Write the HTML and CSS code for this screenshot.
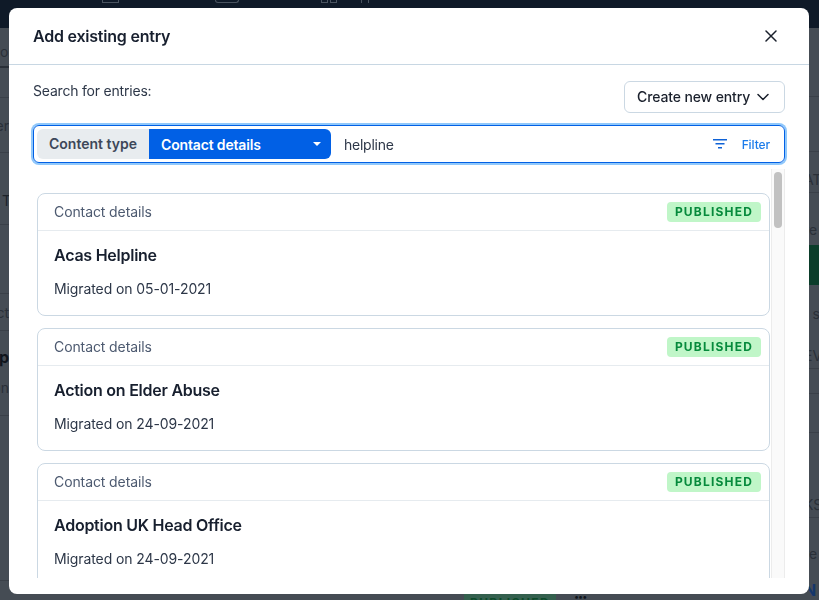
FILE: index.html
```html
<!DOCTYPE html>
<html lang="en">
<head>
<meta charset="utf-8">
<title>Add existing entry</title>
<link rel="stylesheet" href="styles.css">
</head>
<body>
<div class="page">
  <div class="topbar">
    <span class="ghost g1"></span>
    <span class="ghost g2"></span>
    <span class="ghost g3"></span>
    <span class="ghost g3"></span>
    <span class="ghost g4"></span>
  </div>
  <div class="under">
    <div class="strip strip-left">
      <div class="row r-l1"><span class="start">on</span><i class="tabline"></i></div>
      <div class="row r-l2 lined"></div>
      <div class="row r-l3 lined"><span>er</span></div>
      <div class="row r-l4 lined"><span class="dark">T</span></div>
      <div class="row r-l5 lined"></div>
      <div class="row r-l6 lined"><span>ct</span></div>
      <div class="row r-l7 lined"><span class="bold">p</span><span class="sub">on</span></div>
      <div class="row r-l8 lined"></div>
      <div class="row r-l9 lined"></div>
    </div>
    <div class="center">
      <div class="frag">
        <span class="frag-badge">PUBLISHED</span>
        <span class="frag-dots">•••</span>
      </div>
    </div>
    <div class="strip strip-right">
      <div class="row r-r1 lined"></div>
      <div class="row r-r2 lined"></div>
      <div class="row r-r3 lined"><span>AT</span></div>
      <div class="row r-r4"><span>re</span></div>
      <div class="row r-r5 green"></div>
      <div class="row r-r6"><span>t s</span></div>
      <div class="row r-r7 lined"><span>EV</span></div>
      <div class="row r-r8 lined"></div>
      <div class="row r-r9 lined"></div>
      <div class="row r-r10 lined"><span>KS</span></div>
      <div class="row r-r11"><span>re</span></div>
      <div class="row r-r12"><span class="blue">N</span></div>
    </div>
  </div>
</div>

<div class="modal" role="dialog" aria-label="Add existing entry">
  <header class="modal-head">
    <h2 class="modal-title">Add existing entry</h2>
    <button class="close" aria-label="Close">
      <svg width="12" height="12" viewBox="0 0 12 12" fill="none" stroke="#1a202c" stroke-width="1.5" stroke-linecap="round"><path d="M1 1l10 10M11 1L1 11"/></svg>
    </button>
  </header>
  <div class="modal-body">
    <div class="tools">
      <label class="search-label">Search for entries:</label>
      <button class="create">Create new entry
        <svg width="12" height="8" viewBox="0 0 12 8" fill="none" stroke="#1a202c" stroke-width="1.5" stroke-linecap="round" stroke-linejoin="round"><path d="M1 1.5l5 5 5-5"/></svg>
      </button>
    </div>
    <div class="searchbar">
      <span class="ct-label">Content type</span>
      <span class="ct-select"><span class="ct-value">Contact details</span><i class="caret"></i></span>
      <input class="query" value="helpline">
      <span class="filter">
        <svg width="14" height="10" viewBox="0 0 14 10" fill="#0f62d6"><rect x="0" y="0" width="14" height="1.5"/><rect x="2.5" y="4" width="9" height="1.5"/><rect x="5" y="8" width="4" height="1.5"/></svg>
        <span class="filter-text">Filter</span>
      </span>
    </div>
    <div class="results">
      <div class="list">
        <article class="card">
          <div class="card-head"><span class="card-type">Contact details</span><span class="badge">PUBLISHED</span></div>
          <div class="card-body"><h3 class="card-title">Acas Helpline</h3><p class="card-meta">Migrated on 05-01-2021</p></div>
        </article>
        <article class="card">
          <div class="card-head"><span class="card-type">Contact details</span><span class="badge">PUBLISHED</span></div>
          <div class="card-body"><h3 class="card-title">Action on Elder Abuse</h3><p class="card-meta">Migrated on 24-09-2021</p></div>
        </article>
        <article class="card">
          <div class="card-head"><span class="card-type">Contact details</span><span class="badge">PUBLISHED</span></div>
          <div class="card-body"><h3 class="card-title">Adoption UK Head Office</h3><p class="card-meta">Migrated on 24-09-2021</p></div>
        </article>
      </div>
      <div class="track"><div class="thumb"></div></div>
    </div>
  </div>
</div>
</body>
</html>
```

FILE: styles.css
```css
* { box-sizing: border-box; }
html, body { margin: 0; height: 600px; overflow: hidden; }
body { font-family: Inter, "Liberation Sans", sans-serif; color: #1a202c; background: #454c54; }

/* dimmed page behind the dialog */
.page { height: 600px; display: flex; flex-direction: column; background: #454c54; color: #2a3038; font-size: 14px; }
.topbar { height: 28px; flex: none; background: #0f1a28; display: flex; align-items: flex-start; padding-left: 102px; }
.ghost { display: block; height: 3px; border: 1px solid #4a5460; border-top: 0; }
.g1 { width: 17px; margin-right: 96px; }
.g2 { width: 24px; margin-right: 82px; border-radius: 0 0 4px 4px; }
.g3 { width: 7px; margin-right: 2px; }
.g4 { width: 8px; margin-left: 22px; border-bottom: 0; }
.under { flex: 1; display: flex; min-height: 0; }
.center { flex: 1; display: flex; flex-direction: column; justify-content: flex-end; }
.strip { width: 9px; flex: none; display: flex; flex-direction: column; overflow: hidden; }
.strip-right { width: 10px; }
.row { display: flex; flex-direction: column; justify-content: center; align-items: flex-start; flex: none; white-space: nowrap; overflow: hidden; }
.strip-left .row { align-items: flex-end; }
.strip-left .row .start { align-self: flex-start; }
.lined { border-bottom: 1px solid #3a4048; }
.dark { color: #1c222a; margin-right: -2px; }
.bold { font-weight: 700; color: #10151c; font-size: 16px; line-height: 22px; }
.sub { margin-top: 11px; }
.blue { color: #14366b; font-weight: 700; font-size: 16px; }
.strip-right .row span { margin-left: -5px; }
.tabline { display: block; width: 100%; height: 2px; background: #2a3038; margin-top: 6px; flex: none; }

.r-l1 { height: 46px; padding-top: 8px; }
.r-l2 { height: 24px; }
.r-l3 { height: 55px; }
.r-l4 { height: 72px; padding-top: 24px; }
.r-l5 { height: 69px; }
.r-l6 { height: 37px; }
.r-l7 { height: 85px; justify-content: flex-start; padding-top: 15px; }
.r-l8 { height: 165px; }
.r-l9 { height: 20px; border-bottom: 0; }

.r-r1 { height: 69px; }
.r-r2 { height: 55px; }
.r-r3 { height: 41px; justify-content: flex-end; padding-bottom: 4px; }
.r-r4 { height: 52px; justify-content: flex-end; padding-bottom: 7px; }
.green { height: 40px; background: #0b3d2a; }
.r-r6 { height: 57px; }
.r-r7 { height: 27px; }
.r-r8 { height: 25px; }
.r-r9 { height: 39px; }
.r-r10 { height: 85px; justify-content: flex-end; padding-bottom: 4px; }
.r-r11 { height: 56px; padding-top: 14px; }
.r-r12 { height: 26px; padding-top: 6px; }

.frag { height: 6px; display: flex; align-items: flex-start; padding-left: 455px; overflow: hidden; }
.frag-badge { width: 92px; height: 20px; background: #34604e; color: #0d4a2a; font-size: 12px; font-weight: 700; letter-spacing: 1.4px; line-height: 17px; text-align: center; }
.frag-dots { margin-left: 18px; font-size: 9px; letter-spacing: -1px; line-height: 6px; color: #10151c; }

/* dialog */
.modal { position: fixed; left: 9px; top: 8px; width: 800px; height: 586px; background: #fff; border-radius: 8px; display: flex; flex-direction: column; overflow: hidden; }
.modal-head { height: 57px; flex: none; border-bottom: 1px solid #c8d7e3; display: flex; align-items: center; justify-content: space-between; padding: 0 32px 0 24px; }
.modal-title { margin: 0; font-size: 16px; line-height: 24px; font-weight: 600; color: #171f2e; letter-spacing: -0.22px; }
.close { width: 12px; height: 12px; padding: 0; border: 0; background: none; display: flex; }
.modal-body { flex: 1; min-height: 0; display: flex; flex-direction: column; padding: 16px 24px 16px; }
.tools { height: 32px; flex: none; display: flex; justify-content: space-between; align-items: flex-start; }
.search-label { font-size: 14px; line-height: 20px; color: #2d3748; letter-spacing: -0.2px; }
.create { height: 32px; width: 161px; padding: 0 15px 0 12px; border: 1px solid #cbd8e3; border-radius: 6px; background: #fff; font: 500 14px/20px Inter, "Liberation Sans", sans-serif; letter-spacing: -0.13px; color: #1a202c; display: flex; align-items: center; justify-content: space-between; white-space: nowrap; }
.searchbar { margin-top: 12px; height: 38px; flex: none; border: 1px solid #0160e5; border-radius: 6px; box-shadow: 0 0 0 2px #90c8fb; display: flex; align-items: center; padding-left: 3px; padding-right: 14px; }
.ct-label { width: 112px; height: 30px; flex: none; background: #e8ecef; color: #3d4759; border-radius: 6px 0 0 6px; font-size: 14px; font-weight: 600; line-height: 30px; text-align: center; }
.ct-select { width: 182px; height: 30px; flex: none; background: #0160e5; color: #fff; border-radius: 0 6px 6px 0; font-size: 14px; font-weight: 600; padding: 0 10px 0 12px; display: flex; align-items: center; justify-content: space-between; }
.ct-value { letter-spacing: -0.16px; line-height: 20px; margin-top: 2px; }
.caret { width: 0; height: 0; border: 4px solid transparent; border-top: 4px solid #fff; border-bottom: 0; }
.query { flex: 1; min-width: 0; height: 22px; border: 0; outline: 0; background: none; font: 400 14px/22px Inter, "Liberation Sans", sans-serif; letter-spacing: -0.25px; color: #2d3748; padding: 2px 0 0; margin-left: 13px; }
.filter { display: flex; align-items: center; gap: 15px; color: #1a7bea; font-size: 12px; font-weight: 500; }
.filter-text { line-height: 20px; padding-top: 1px; letter-spacing: -0.1px; }
.results { flex: 1; min-height: 0; margin-top: 6px; display: flex; justify-content: space-between; overflow: hidden; padding-left: 4px; }
.list { width: 733px; flex: none; display: flex; flex-direction: column; gap: 12px; padding-top: 24px; }
.card { flex: none; height: 123px; border: 1px solid #cbd8e3; border-radius: 8px; }
.card-head { height: 37px; border-bottom: 1px solid #e6ebef; display: flex; align-items: center; justify-content: space-between; padding: 0 8px 0 16px; font-size: 14px; color: #4d5a70; }
.card-type { letter-spacing: -0.1px; margin-top: -2px; }
.badge { height: 20px; width: 94px; background: #c0f6c8; border-radius: 4px; color: #068a3c; font-size: 12px; font-weight: 700; letter-spacing: 1.2px; line-height: 19px; text-align: center; }
.card-body { padding: 14px 16px; }
.card-title { margin: 0; font-size: 16px; line-height: 20px; font-weight: 600; color: #171f2e; letter-spacing: -0.25px; }
.card-meta { margin: 14px 0 0; font-size: 14px; line-height: 20px; color: #2d3748; letter-spacing: -0.1px; }
.track { width: 14px; flex: none; background: #fafafa; border-left: 1px solid #ececec; border-right: 1px solid #ececec; padding: 3px 2px 0; }
.thumb { height: 56px; background: #c1c1c1; border-radius: 4px; }
```
